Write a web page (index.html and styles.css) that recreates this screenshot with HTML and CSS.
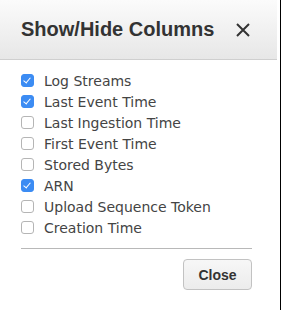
FILE: index.html
```html
<!DOCTYPE html>
<html lang="en">
<head>
  <meta charset="UTF-8">
  <title>Show/Hide Columns</title>
  <link rel="stylesheet" href="styles.css">
</head>
<body>
  <div class="modal">
    <header class="modal-header">
      <h1>Show/Hide Columns</h1>
      <button class="close-x" aria-label="Close">
        <svg width="14" height="14" viewBox="0 0 14 14">
          <path d="M1 1 L13 13 M13 1 L1 13" stroke="#333" stroke-width="2" fill="none"/>
        </svg>
      </button>
    </header>
    <div class="modal-body">
      <ul class="columns">
        <li><span class="box checked"></span>Log Streams</li>
        <li><span class="box checked"></span>Last Event Time</li>
        <li><span class="box"></span>Last Ingestion Time</li>
        <li><span class="box"></span>First Event Time</li>
        <li><span class="box"></span>Stored Bytes</li>
        <li><span class="box checked"></span>ARN</li>
        <li><span class="box"></span>Upload Sequence Token</li>
        <li><span class="box"></span>Creation Time</li>
      </ul>
      <div class="footer">
        <button class="btn">Close</button>
      </div>
    </div>
  </div>
</body>
</html>
```

FILE: styles.css
```css
body {
  margin: 0;
  padding: 0;
  background-color: #ffffff;
  font-family: 'DejaVu Sans', Verdana, sans-serif;
}
.modal {
  width: 280px;
  height: 310px;
  border-right: 1px solid #000;
  background-color: #fff;
}
.modal-header {
  width: 277px;
  height: 59px;
  box-sizing: content-box;
  display: flex;
  align-items: center;
  justify-content: space-between;
  background: linear-gradient(#fbfbfb, #e7e7e7);
  border-bottom: 1px solid #cfcfcf;
}
.modal-header h1 {
  margin: 0 0 0 21px;
  font-family: 'Liberation Sans', Arial, sans-serif;
  font-size: 20px;
  font-weight: bold;
  color: #333;
}
.close-x {
  margin-right: 27px;
  padding: 0;
  border: none;
  background: none;
  display: flex;
}
.modal-body {
  width: 231px;
  margin-left: 21px;
  padding-top: 10px;
}
.columns {
  list-style: none;
  margin: 0;
  padding: 0 0 10px 0;
  border-bottom: 1px solid #b8b8b8;
}
.columns li {
  height: 21px;
  display: flex;
  align-items: center;
  font-size: 14px;
  color: #444;
}
.box {
  width: 11px;
  height: 11px;
  margin-right: 10px;
  border: 1px solid #b5b5b5;
  border-radius: 3px;
  background-color: #fff;
  position: relative;
}
.box.checked {
  border-color: #3c8cf3;
  background-color: #3c8cf3;
}
.box.checked::after {
  content: "";
  position: absolute;
  left: 3px;
  top: 1px;
  width: 3px;
  height: 6px;
  border: solid #fff;
  border-width: 0 1.5px 1.5px 0;
  transform: rotate(40deg);
}
.footer {
  display: flex;
  justify-content: flex-end;
  padding-top: 10px;
}
.btn {
  width: 69px;
  height: 31px;
  border: 1px solid #c2c2c2;
  border-radius: 4px;
  background: linear-gradient(#f7f7f7, #ececec);
  font-family: 'Liberation Sans', Arial, sans-serif;
  font-size: 14px;
  font-weight: bold;
  color: #333;
}
```
